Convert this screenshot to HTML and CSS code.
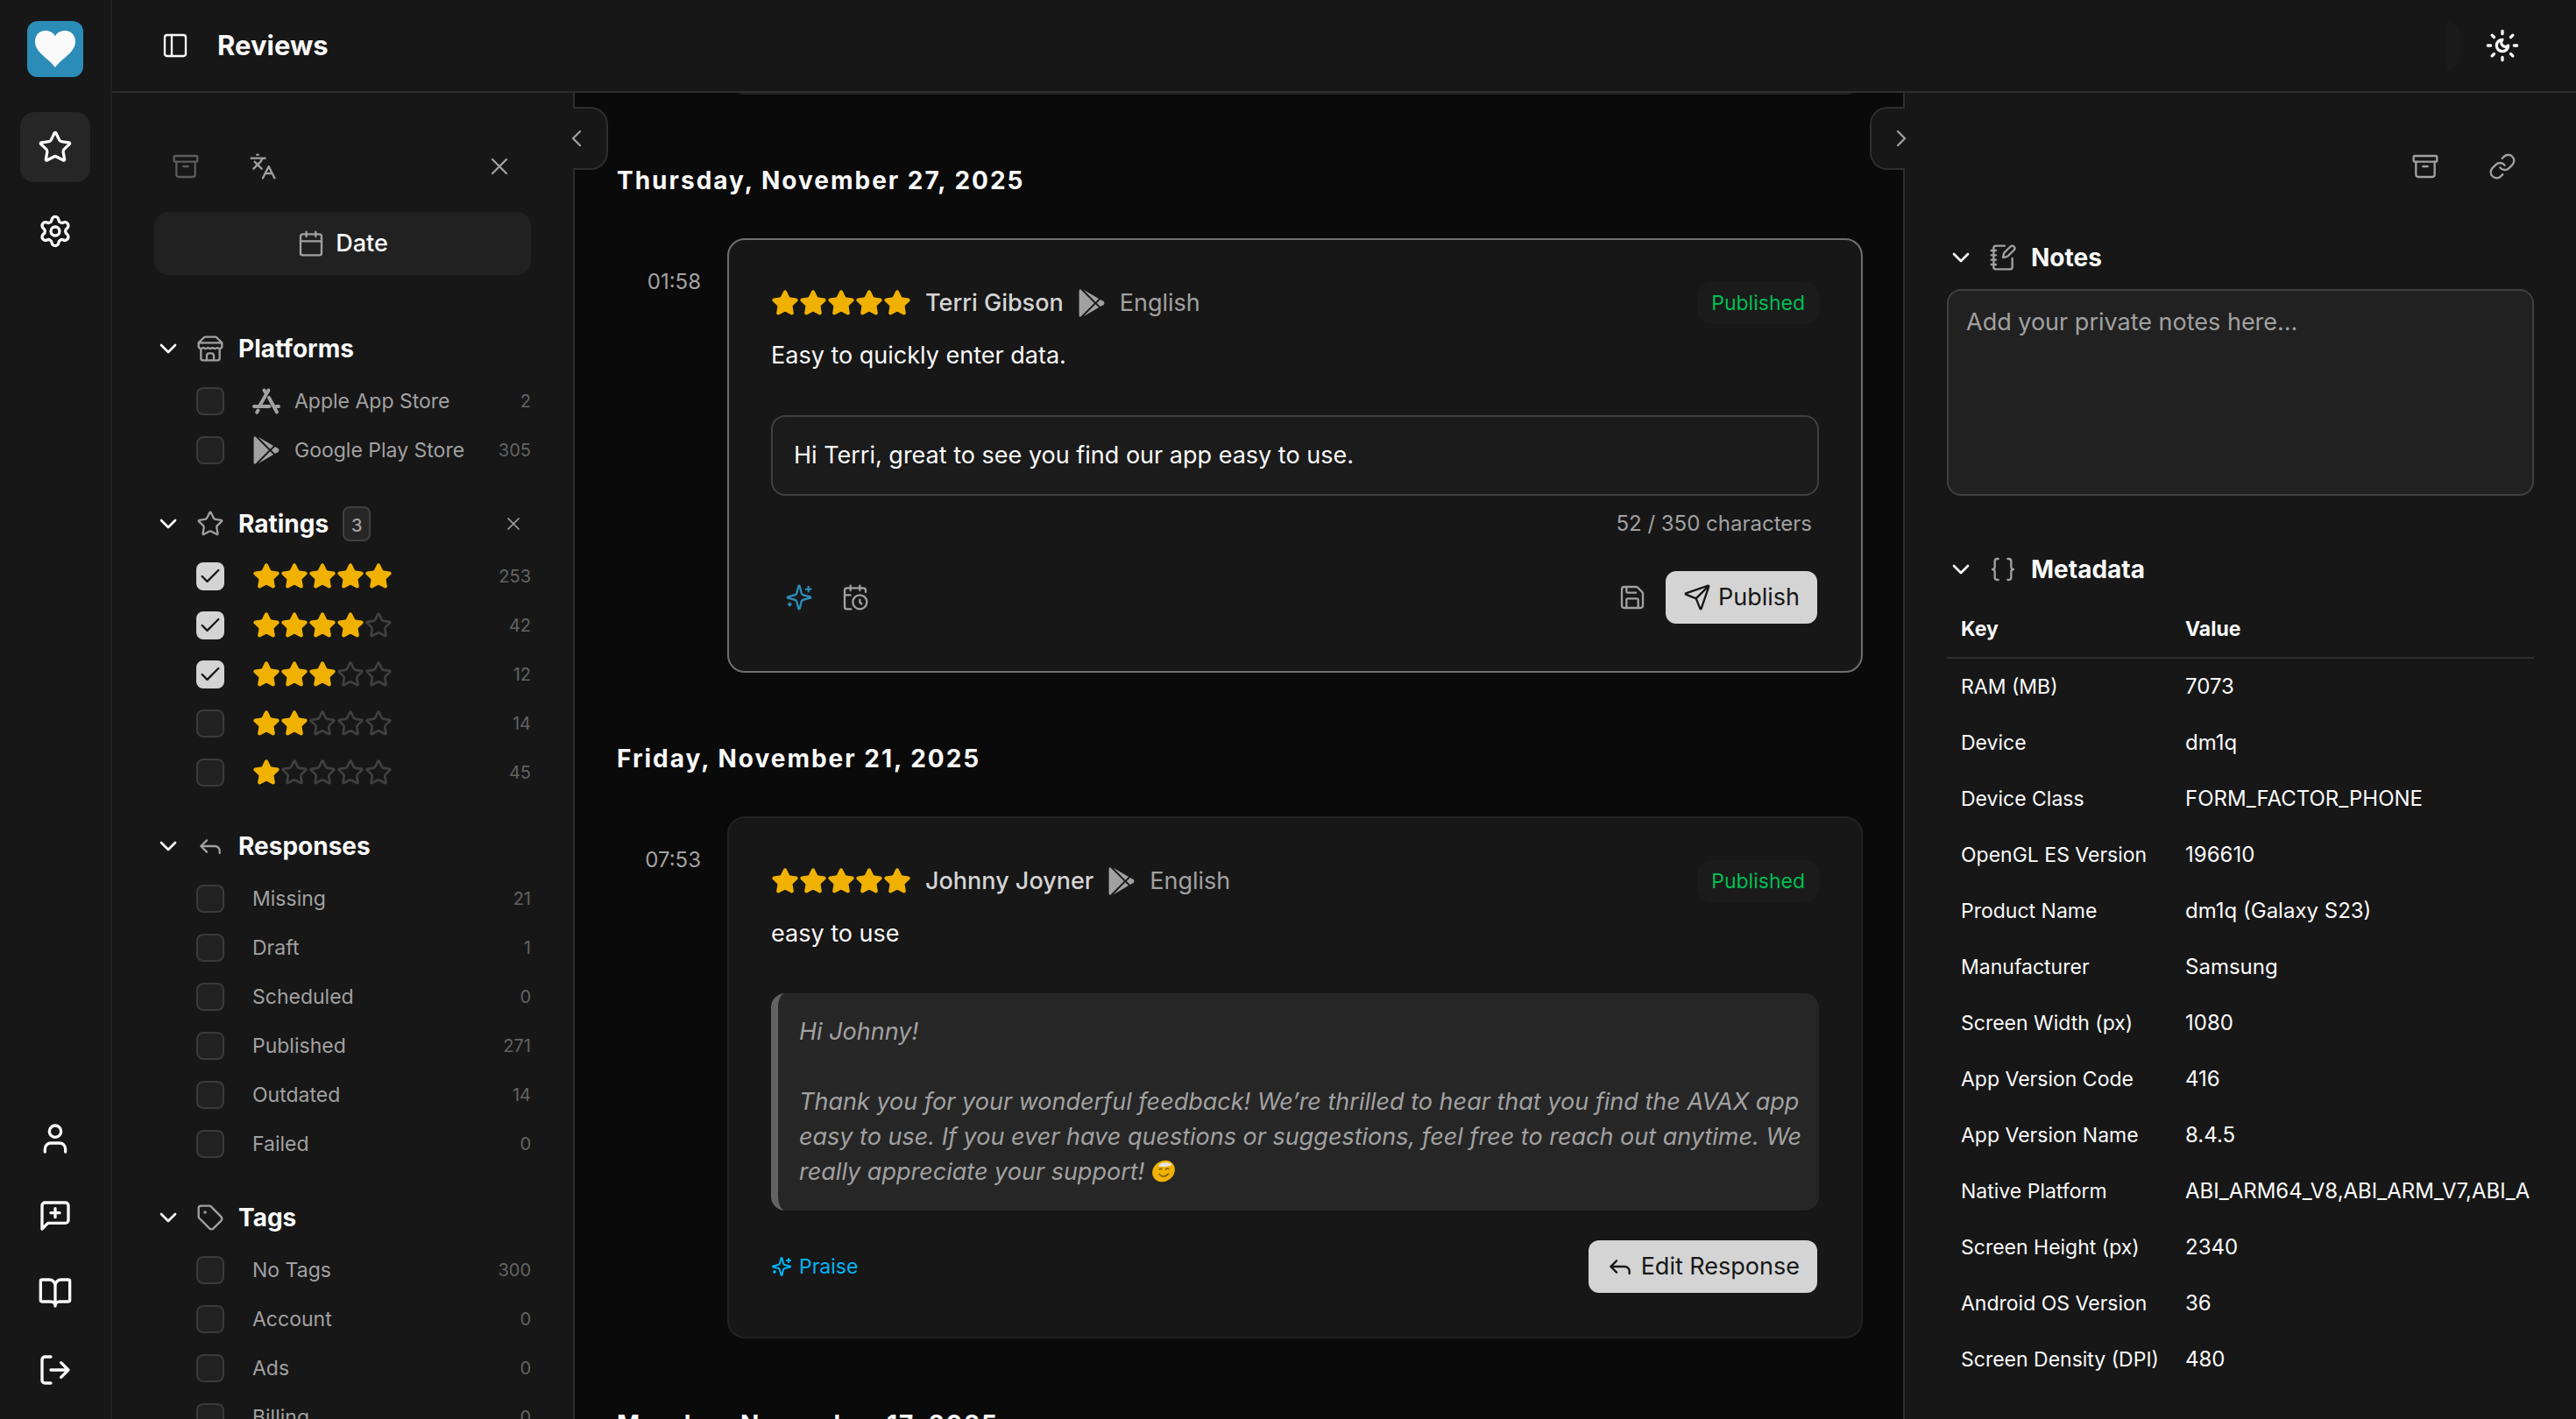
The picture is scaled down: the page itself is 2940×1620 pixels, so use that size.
FILE: index.html
```html
<!DOCTYPE html>
<html lang="en">
<head>
<meta charset="utf-8">
<meta name="viewport" content="width=device-width, initial-scale=1">
<title>Reviews</title>
<link rel="stylesheet" href="styles.css">
</head>
<body>
<svg class="sprite" aria-hidden="true">
  <symbol id="i-star" viewBox="0 0 24 24"><path d="M11.525 2.295a.53.53 0 0 1 .95 0l2.31 4.679a2.123 2.123 0 0 0 1.595 1.16l5.166.756a.53.53 0 0 1 .294.904l-3.736 3.638a2.123 2.123 0 0 0-.611 1.878l.882 5.14a.53.53 0 0 1-.771.56l-4.618-2.428a2.122 2.122 0 0 0-1.973 0L6.396 21.01a.53.53 0 0 1-.77-.56l.881-5.139a2.122 2.122 0 0 0-.611-1.879L2.16 9.795a.53.53 0 0 1 .294-.906l5.165-.755a2.122 2.122 0 0 0 1.597-1.16z"/></symbol>
  <symbol id="i-settings" viewBox="0 0 24 24"><path d="M9.671 4.136a2.34 2.34 0 0 1 4.659 0 2.34 2.34 0 0 0 3.319 1.915 2.34 2.34 0 0 1 2.33 4.033 2.34 2.34 0 0 0 0 3.831 2.34 2.34 0 0 1-2.33 4.033 2.34 2.34 0 0 0-3.319 1.915 2.34 2.34 0 0 1-4.659 0 2.34 2.34 0 0 0-3.32-1.915 2.34 2.34 0 0 1-2.33-4.033 2.34 2.34 0 0 0 0-3.831A2.34 2.34 0 0 1 6.35 6.051a2.34 2.34 0 0 0 3.319-1.915"/><circle cx="12" cy="12" r="3"/></symbol>
  <symbol id="i-user" viewBox="0 0 24 24"><path d="M19 21v-2a4 4 0 0 0-4-4H9a4 4 0 0 0-4 4v2"/><circle cx="12" cy="7" r="4"/></symbol>
  <symbol id="i-message" viewBox="0 0 24 24"><path d="M21 15a2 2 0 0 1-2 2H7l-4 4V5a2 2 0 0 1 2-2h14a2 2 0 0 1 2 2zM12 7v6M9 10h6"/></symbol>
  <symbol id="i-book" viewBox="0 0 24 24"><path d="M12 7v14M3 18a1 1 0 0 1-1-1V4a1 1 0 0 1 1-1h5a4 4 0 0 1 4 4 4 4 0 0 1 4-4h5a1 1 0 0 1 1 1v13a1 1 0 0 1-1 1h-6a3 3 0 0 0-3 3 3 3 0 0 0-3-3z"/></symbol>
  <symbol id="i-logout" viewBox="0 0 24 24"><path d="m16 17 5-5-5-5M21 12H9M9 21H5a2 2 0 0 1-2-2V5a2 2 0 0 1 2-2h4"/></symbol>
  <symbol id="i-panel" viewBox="0 0 24 24"><rect width="18" height="18" x="3" y="3" rx="2"/><path d="M9 3v18"/></symbol>
  <symbol id="i-sunmoon" viewBox="0 0 24 24"><path d="M12 8a2.83 2.83 0 0 0 4 4 4 4 0 1 1-4-4M12 2v2M12 20v2M4.9 4.9l1.4 1.4M17.7 17.7l1.4 1.4M2 12h2M20 12h2M6.3 17.7l-1.4 1.4M19.1 4.9l-1.4 1.4"/></symbol>
  <symbol id="i-archive" viewBox="0 0 24 24"><rect width="20" height="5" x="2" y="3" rx="1"/><path d="M4 8v11a2 2 0 0 0 2 2h12a2 2 0 0 0 2-2V8M10 12h4"/></symbol>
  <symbol id="i-languages" viewBox="0 0 24 24"><path d="m5 8 6 6M4 14l6-6 2-3M2 5h12M7 2h1M22 22l-5-10-5 10M14 18h6"/></symbol>
  <symbol id="i-x" viewBox="0 0 24 24"><path d="M18 6 6 18M6 6l12 12"/></symbol>
  <symbol id="i-calendar" viewBox="0 0 24 24"><path d="M8 2v4M16 2v4M3 10h18"/><rect width="18" height="18" x="3" y="4" rx="2"/></symbol>
  <symbol id="i-down" viewBox="0 0 24 24"><path d="m6 9 6 6 6-6"/></symbol>
  <symbol id="i-left" viewBox="0 0 24 24"><path d="m15 18-6-6 6-6"/></symbol>
  <symbol id="i-right" viewBox="0 0 24 24"><path d="m9 18 6-6-6-6"/></symbol>
  <symbol id="i-store" viewBox="0 0 24 24"><path d="m2 7 4.41-4.41A2 2 0 0 1 7.83 2h8.34a2 2 0 0 1 1.42.59L22 7M4 12v8a2 2 0 0 0 2 2h12a2 2 0 0 0 2-2v-8M15 22v-4a2 2 0 0 0-2-2h-2a2 2 0 0 0-2 2v4M2 7h20M22 7v3a2 2 0 0 1-2 2a2.7 2.7 0 0 1-1.59-.63.7.7 0 0 0-.82 0A2.7 2.7 0 0 1 16 12a2.7 2.7 0 0 1-1.59-.63.7.7 0 0 0-.82 0A2.7 2.7 0 0 1 12 12a2.7 2.7 0 0 1-1.59-.63.7.7 0 0 0-.82 0A2.7 2.7 0 0 1 8 12a2.7 2.7 0 0 1-1.59-.63.7.7 0 0 0-.82 0A2.7 2.7 0 0 1 4 12a2 2 0 0 1-2-2V7"/></symbol>
  <symbol id="i-reply" viewBox="0 0 24 24"><path d="m9 17-5-5 5-5M20 18v-2a4 4 0 0 0-4-4H4"/></symbol>
  <symbol id="i-tag" viewBox="0 0 24 24"><path d="M12.586 2.586A2 2 0 0 0 11.172 2H4a2 2 0 0 0-2 2v7.172a2 2 0 0 0 .586 1.414l8.704 8.704a2.426 2.426 0 0 0 3.42 0l6.58-6.58a2.426 2.426 0 0 0 0-3.42z"/><circle cx="7.5" cy="7.5" r=".5" fill="currentColor"/></symbol>
  <symbol id="i-appstore" viewBox="0 0 32 32"><path stroke-width="4" d="M18.500 3.500 8.500 21M6.500 26.500 5.200 28.800M2 22h17.500M27.500 22h2.500M13.500 3.500l1.500 2.600M19 12l9 16.500"/></symbol>
  <symbol id="i-play" viewBox="0 0 512 512"><path fill="currentColor" stroke="none" d="M325.3 234.3L104.600 13l280.800 161.200-60.100 60.100zM47 0C34 6.800 25.300 19.200 25.300 35.300v441.300c0 16.100 8.700 28.500 21.700 35.300l256.600-256L47 0zm425.200 225.600l-58.900-34.100-65.700 64.500 65.700 64.500 60.100-34.100c18-14.300 18-46.500-1.200-60.800zM104.600 499l280.800-161.200-60.100-60.100L104.600 499z"/></symbol>
  <symbol id="i-sparkles" viewBox="0 0 24 24"><path d="M9.937 15.5A2 2 0 0 0 8.5 14.063l-6.135-1.582a.5.5 0 0 1 0-.962L8.5 9.936A2 2 0 0 0 9.937 8.5l1.582-6.135a.5.5 0 0 1 .963 0L14.063 8.5A2 2 0 0 0 15.5 9.937l6.135 1.581a.5.5 0 0 1 0 .964L15.5 14.063a2 2 0 0 0-1.437 1.437l-1.582 6.135a.5.5 0 0 1-.963 0zM20 3v4M22 5h-4M4 17v2M5 18H3"/></symbol>
  <symbol id="i-schedule" viewBox="0 0 24 24"><path d="M21 7.500V6a2 2 0 0 0-2-2H5a2 2 0 0 0-2 2v14a2 2 0 0 0 2 2h3.500M16 2v4M8 2v4M3 10h5M17.500 17.500 16 16.300V14"/><circle cx="16" cy="16" r="6"/></symbol>
  <symbol id="i-save" viewBox="0 0 24 24"><path d="M15.200 3a2 2 0 0 1 1.400.6l3.800 3.800a2 2 0 0 1 .6 1.400V19a2 2 0 0 1-2 2H5a2 2 0 0 1-2-2V5a2 2 0 0 1 2-2zM17 21v-7a1 1 0 0 0-1-1H8a1 1 0 0 0-1 1v7M7 3v4a1 1 0 0 0 1 1h7"/></symbol>
  <symbol id="i-send" viewBox="0 0 24 24"><path d="M14.536 21.686a.5.5 0 0 0 .937-.024l6.5-19a.496.496 0 0 0-.635-.635l-19 6.5a.5.5 0 0 0-.024.937l7.930 3.180a2 2 0 0 1 1.112 1.110zM21.854 2.147l-10.940 10.939"/></symbol>
  <symbol id="i-link" viewBox="0 0 24 24"><path d="M10 13a5 5 0 0 0 7.540.540l3-3a5 5 0 0 0-7.070-7.070l-1.720 1.710M14 11a5 5 0 0 0-7.540-.540l-3 3a5 5 0 0 0 7.070 7.070l1.710-1.710"/></symbol>
  <symbol id="i-notebook" viewBox="0 0 24 24"><path d="M13.400 2H6a2 2 0 0 0-2 2v16a2 2 0 0 0 2 2h12a2 2 0 0 0 2-2v-7.400M2 6h4M2 10h4M2 14h4M2 18h4M21.378 5.626a1 1 0 1 0-3.004-3.004l-5.010 5.012a2 2 0 0 0-.506.854l-.837 2.870a.5.5 0 0 0 .62.62l2.870-.837a2 2 0 0 0 .854-.506z"/></symbol>
  <symbol id="i-braces" viewBox="0 0 24 24"><path d="M8 3H7a2 2 0 0 0-2 2v5a2 2 0 0 1-2 2 2 2 0 0 1 2 2v5c0 1.100.9 2 2 2h1M16 21h1a2 2 0 0 0 2-2v-5c0-1.100.9-2 2-2a2 2 0 0 1-2-2V5a2 2 0 0 0-2-2h-1"/></symbol>
  <symbol id="i-stars-5" viewBox="0 0 120 24"><use href="#i-star" width="24" height="24"/><use href="#i-star" x="24" width="24" height="24"/><use href="#i-star" x="48" width="24" height="24"/><use href="#i-star" x="72" width="24" height="24"/><use href="#i-star" x="96" width="24" height="24"/></symbol>
</svg>

<div class="app">
  <nav class="rail" aria-label="Main">
    <a class="logo" href="#" aria-label="Home">
      <svg viewBox="0 0 64 64"><path fill="#fafafa" d="M32 53C24 42 9 36 9 23.500 9 16 14 11 20.500 11c5.500 0 10 2.500 11.500 6.500C33.500 13.500 38 11 43.500 11 50 11 55 16 55 23.500 55 36 40 42 32 53z"/></svg>
    </a>
    <div class="rail-group">
      <a class="rail-link is-active" href="#" aria-label="Reviews"><svg class="icon"><use href="#i-star"/></svg></a>
      <a class="rail-link" href="#" aria-label="Settings"><svg class="icon"><use href="#i-settings"/></svg></a>
    </div>
    <div class="rail-group rail-group-bottom">
      <a class="rail-link" href="#" aria-label="Account"><svg class="icon"><use href="#i-user"/></svg></a>
      <a class="rail-link" href="#" aria-label="Feedback"><svg class="icon"><use href="#i-message"/></svg></a>
      <a class="rail-link" href="#" aria-label="Documentation"><svg class="icon"><use href="#i-book"/></svg></a>
      <a class="rail-link" href="#" aria-label="Log out"><svg class="icon"><use href="#i-logout"/></svg></a>
    </div>
  </nav>

  <div class="page">
    <header class="topbar">
      <button class="icon-button is-bright" type="button" aria-label="Toggle sidebar"><svg class="icon"><use href="#i-panel"/></svg></button>
      <h1 class="page-title">Reviews</h1>
      <span class="topbar-edge"></span>
      <button class="icon-button is-bright is-large" type="button" aria-label="Toggle theme"><svg class="icon"><use href="#i-sunmoon"/></svg></button>
    </header>

    <div class="columns">
      <aside class="panel filters" aria-label="Filters">
        <button class="handle handle-left" type="button" aria-label="Collapse filters"><svg class="icon"><use href="#i-left"/></svg></button>
        <div class="panel-scroll">
          <div class="toolbar">
            <button class="icon-button is-faded" type="button" aria-label="Archived"><svg class="icon"><use href="#i-archive"/></svg></button>
            <button class="icon-button" type="button" aria-label="Translate"><svg class="icon"><use href="#i-languages"/></svg></button>
            <button class="icon-button push-right" type="button" aria-label="Clear filters"><svg class="icon"><use href="#i-x"/></svg></button>
          </div>
          <button class="date-button" type="button"><svg class="icon"><use href="#i-calendar"/></svg>Date</button>

          <section class="filter-group">
            <h2 class="group-head"><svg class="icon chevron"><use href="#i-down"/></svg><svg class="icon"><use href="#i-store"/></svg>Platforms</h2>
            <label class="option"><input class="check" type="checkbox"><span class="option-name"><svg class="icon"><use href="#i-appstore"/></svg>Apple App Store</span><span class="count">2</span></label>
            <label class="option"><input class="check" type="checkbox"><span class="option-name"><svg class="icon"><use href="#i-play"/></svg>Google Play Store</span><span class="count">305</span></label>
          </section>

          <section class="filter-group">
            <h2 class="group-head"><svg class="icon chevron"><use href="#i-down"/></svg><svg class="icon"><use href="#i-star"/></svg>Ratings<span class="badge">3</span><button class="clear-button push-right" type="button" aria-label="Clear ratings"><svg class="icon"><use href="#i-x"/></svg></button></h2>
            <label class="option"><input class="check" type="checkbox" checked aria-label="5 stars"><span class="option-name stars"><svg class="star on"><use href="#i-star"/></svg><svg class="star on"><use href="#i-star"/></svg><svg class="star on"><use href="#i-star"/></svg><svg class="star on"><use href="#i-star"/></svg><svg class="star on"><use href="#i-star"/></svg></span><span class="count">253</span></label>
            <label class="option"><input class="check" type="checkbox" checked aria-label="4 stars"><span class="option-name stars"><svg class="star on"><use href="#i-star"/></svg><svg class="star on"><use href="#i-star"/></svg><svg class="star on"><use href="#i-star"/></svg><svg class="star on"><use href="#i-star"/></svg><svg class="star"><use href="#i-star"/></svg></span><span class="count">42</span></label>
            <label class="option"><input class="check" type="checkbox" checked aria-label="3 stars"><span class="option-name stars"><svg class="star on"><use href="#i-star"/></svg><svg class="star on"><use href="#i-star"/></svg><svg class="star on"><use href="#i-star"/></svg><svg class="star"><use href="#i-star"/></svg><svg class="star"><use href="#i-star"/></svg></span><span class="count">12</span></label>
            <label class="option"><input class="check" type="checkbox" aria-label="2 stars"><span class="option-name stars"><svg class="star on"><use href="#i-star"/></svg><svg class="star on"><use href="#i-star"/></svg><svg class="star"><use href="#i-star"/></svg><svg class="star"><use href="#i-star"/></svg><svg class="star"><use href="#i-star"/></svg></span><span class="count">14</span></label>
            <label class="option"><input class="check" type="checkbox" aria-label="1 star"><span class="option-name stars"><svg class="star on"><use href="#i-star"/></svg><svg class="star"><use href="#i-star"/></svg><svg class="star"><use href="#i-star"/></svg><svg class="star"><use href="#i-star"/></svg><svg class="star"><use href="#i-star"/></svg></span><span class="count">45</span></label>
          </section>

          <section class="filter-group">
            <h2 class="group-head"><svg class="icon chevron"><use href="#i-down"/></svg><svg class="icon"><use href="#i-reply"/></svg>Responses</h2>
            <label class="option"><input class="check" type="checkbox"><span class="option-name">Missing</span><span class="count">21</span></label>
            <label class="option"><input class="check" type="checkbox"><span class="option-name">Draft</span><span class="count">1</span></label>
            <label class="option"><input class="check" type="checkbox"><span class="option-name">Scheduled</span><span class="count">0</span></label>
            <label class="option"><input class="check" type="checkbox"><span class="option-name">Published</span><span class="count">271</span></label>
            <label class="option"><input class="check" type="checkbox"><span class="option-name">Outdated</span><span class="count">14</span></label>
            <label class="option"><input class="check" type="checkbox"><span class="option-name">Failed</span><span class="count">0</span></label>
          </section>

          <section class="filter-group">
            <h2 class="group-head"><svg class="icon chevron"><use href="#i-down"/></svg><svg class="icon"><use href="#i-tag"/></svg>Tags</h2>
            <label class="option"><input class="check" type="checkbox"><span class="option-name">No Tags</span><span class="count">300</span></label>
            <label class="option"><input class="check" type="checkbox"><span class="option-name">Account</span><span class="count">0</span></label>
            <label class="option"><input class="check" type="checkbox"><span class="option-name">Ads</span><span class="count">0</span></label>
            <label class="option"><input class="check" type="checkbox"><span class="option-name">Billing</span><span class="count">0</span></label>
          </section>
        </div>
      </aside>

      <main class="feed">
        <div class="entry entry-previous"><span class="time"></span><article class="card"></article></div>

        <h2 class="day">Thursday, November 27, 2025</h2>
        <div class="entry">
          <time class="time">01:58</time>
          <article class="card is-selected">
            <div class="card-head">
              <svg class="star-row"><use href="#i-stars-5"/></svg>
              <span class="author">Terri Gibson</span>
              <svg class="icon"><use href="#i-play"/></svg>
              <span class="language">English</span>
              <span class="status">Published</span>
            </div>
            <p class="review-text">Easy to quickly enter data.</p>
            <textarea class="reply-box" rows="1" aria-label="Response">Hi Terri, great to see you find our app easy to use.</textarea>
            <p class="char-count">52 / 350 characters</p>
            <div class="actions actions-edit">
              <button class="icon-button is-accent" type="button" aria-label="Generate response"><svg class="icon"><use href="#i-sparkles"/></svg></button>
              <button class="icon-button" type="button" aria-label="Schedule"><svg class="icon"><use href="#i-schedule"/></svg></button>
              <button class="icon-button push-right" type="button" aria-label="Save draft"><svg class="icon"><use href="#i-save"/></svg></button>
              <button class="primary" type="button"><svg class="icon"><use href="#i-send"/></svg>Publish</button>
            </div>
          </article>
        </div>

        <h2 class="day">Friday, November 21, 2025</h2>
        <div class="entry">
          <time class="time">07:53</time>
          <article class="card">
            <div class="card-head">
              <svg class="star-row"><use href="#i-stars-5"/></svg>
              <span class="author">Johnny Joyner</span>
              <svg class="icon"><use href="#i-play"/></svg>
              <span class="language">English</span>
              <span class="status">Published</span>
            </div>
            <p class="review-text">easy to use</p>
            <blockquote class="response">Hi Johnny!<br><br>Thank you for your wonderful feedback! We’re thrilled to hear that you find the AVAX app easy to use. If you ever have questions or suggestions, feel free to reach out anytime. We really appreciate your support! <svg class="emoji" viewBox="0 0 28 28" role="img" aria-label="Smiling face with halo"><g transform="rotate(-35 14 14)"><ellipse cx="14" cy="14" rx="13.500" ry="11.500" fill="#f0b100"/></g><path d="M8 8c1-4 12-5 15-2 1 3-13 4-15 2z" fill="#e5e5e5"/><path d="M9 12.500c1-2 3-1.500 3 0M16 12.500c1-2 3.500-2 4-.5M9 17c2 4 8 4 11-.5" fill="none" stroke="#7a5a08" stroke-width="1.500"/></svg></blockquote>
            <div class="actions">
              <span class="topic"><svg class="icon"><use href="#i-sparkles"/></svg>Praise</span>
              <button class="primary push-right" type="button"><svg class="icon"><use href="#i-reply"/></svg>Edit Response</button>
            </div>
          </article>
        </div>

        <h2 class="day">Monday, November 17, 2025</h2>
      </main>

      <aside class="panel details" aria-label="Review details">
        <button class="handle handle-right" type="button" aria-label="Collapse details"><svg class="icon"><use href="#i-right"/></svg></button>
        <div class="panel-scroll">
          <div class="toolbar toolbar-end">
            <button class="icon-button" type="button" aria-label="Archive"><svg class="icon"><use href="#i-archive"/></svg></button>
            <button class="icon-button" type="button" aria-label="Copy link"><svg class="icon"><use href="#i-link"/></svg></button>
          </div>
          <section class="notes">
            <h2 class="group-head"><svg class="icon chevron"><use href="#i-down"/></svg><svg class="icon"><use href="#i-notebook"/></svg>Notes</h2>
            <textarea class="notes-box" aria-label="Notes" placeholder="Add your private notes here…"></textarea>
          </section>
          <section>
            <h2 class="group-head"><svg class="icon chevron"><use href="#i-down"/></svg><svg class="icon"><use href="#i-braces"/></svg>Metadata</h2>
            <table class="meta">
              <thead><tr><th class="key">Key</th><th>Value</th></tr></thead>
              <tbody>
                <tr><td>RAM (MB)</td><td>7073</td></tr>
                <tr><td>Device</td><td>dm1q</td></tr>
                <tr><td>Device Class</td><td>FORM_FACTOR_PHONE</td></tr>
                <tr><td>OpenGL ES Version</td><td>196610</td></tr>
                <tr><td>Product Name</td><td>dm1q (Galaxy S23)</td></tr>
                <tr><td>Manufacturer</td><td>Samsung</td></tr>
                <tr><td>Screen Width (px)</td><td>1080</td></tr>
                <tr><td>App Version Code</td><td>416</td></tr>
                <tr><td>App Version Name</td><td>8.4.5</td></tr>
                <tr><td>Native Platform</td><td>ABI_ARM64_V8,ABI_ARM_V7,ABI_A</td></tr>
                <tr><td>Screen Height (px)</td><td>2340</td></tr>
                <tr><td>Android OS Version</td><td>36</td></tr>
                <tr><td>Screen Density (DPI)</td><td>480</td></tr>
              </tbody>
            </table>
          </section>
        </div>
      </aside>
    </div>
  </div>
</div>
</body>
</html>
```
FILE: styles.css
```css
:root {
  --bg: #0a0a0a;
  --panel: #171717;
  --raised: #262626;
  --field: #212121;
  --line: #2e2e2e;
  --line-strong: #404040;
  --text: #fafafa;
  --soft: #d4d4d4;
  --muted: #a1a1a1;
  --dim: #636363;
  --yellow: #f0b100;
  --size-heading: 28px;
  --size-body: 27px;
  --size-note: 24px;
  --size-label: 23px;
  --size-count: 20px;
}

*,
*::before,
*::after {
  box-sizing: border-box;
}

body {
  margin: 0;
  background: var(--bg);
  color: var(--text);
  font-family: Inter, "Liberation Sans", sans-serif;
  font-size: var(--size-body);
  line-height: 40px;
}

h1,
h2,
p,
blockquote {
  margin: 0;
  font-size: inherit;
  font-weight: inherit;
}

button,
textarea {
  border: 0;
  padding: 0;
  background: none;
  color: inherit;
  font: inherit;
}

.sprite {
  position: absolute;
  width: 0;
  height: 0;
}

.icon {
  flex: none;
  width: 32px;
  height: 32px;
  fill: none;
  stroke: currentColor;
  stroke-width: 1.75;
  stroke-linecap: round;
  stroke-linejoin: round;
}

.push-right {
  margin-left: auto;
}

.app {
  display: flex;
  height: 100vh;
  overflow: hidden;
}

/* Icon rail */
.rail {
  display: flex;
  flex: none;
  flex-direction: column;
  align-items: center;
  width: 128px;
  padding: 24px 0 16px;
  border-right: 2px solid #212121;
  background: var(--panel);
}

.logo {
  width: 64px;
  height: 64px;
  margin-bottom: 40px;
  border-radius: 12px;
  background: #2b8cb8;
}

.logo svg {
  display: block;
}

.rail-group {
  display: flex;
  flex-direction: column;
  gap: 16px;
}

.rail-group-bottom {
  gap: 8px;
  margin-top: auto;
}

.rail-link {
  display: grid;
  place-items: center;
  width: 80px;
  height: 80px;
  border-radius: 16px;
  color: var(--text);
}

.rail-link.is-active {
  background: var(--raised);
}

.rail-link .icon {
  width: 40px;
  height: 40px;
  stroke-width: 2;
}

/* Page frame */
.page {
  display: flex;
  flex: 1;
  flex-direction: column;
  min-width: 0;
}

.topbar {
  display: flex;
  flex: none;
  align-items: center;
  gap: 16px;
  height: 106px;
  padding: 0 52px 0 40px;
  border-bottom: 2px solid var(--line);
  background: var(--panel);
}

.page-title {
  font-size: 31px;
  font-weight: 700;
}

.topbar-edge {
  width: 16px;
  height: 56px;
  margin-left: auto;
  border-radius: 0 20px 20px 0;
  background: #1a1a1a;
}

.columns {
  display: flex;
  flex: 1;
  min-height: 0;
}

/* Side panels */
.panel {
  position: relative;
  z-index: 1;
  flex: none;
  background: var(--panel);
}

.filters {
  width: 528px;
  border-right: 2px solid var(--line);
}

.details {
  width: 768px;
  border-left: 2px solid var(--line);
}

.panel-scroll {
  height: 100%;
  padding: 52px 48px 0;
  overflow: hidden;
}

.handle {
  position: absolute;
  top: 16px;
  display: flex;
  align-items: center;
  width: 40px;
  height: 72px;
  border: 2px solid var(--line);
  background: var(--panel);
  color: var(--muted);
}

.handle-left {
  left: 100%;
  border-left: 0;
  border-radius: 0 20px 20px 0;
}

.handle-right {
  right: 100%;
  justify-content: flex-end;
  border-right: 0;
  border-radius: 20px 0 0 20px;
}

.handle-left .icon {
  margin-left: -12px;
}

.handle-right .icon {
  margin-right: -12px;
}

.toolbar {
  display: flex;
  gap: 24px;
  padding: 0 4px;
}

.toolbar-end {
  justify-content: flex-end;
  margin-bottom: 40px;
}

.icon-button {
  display: grid;
  place-items: center;
  width: 64px;
  height: 64px;
  color: var(--muted);
}

.icon-button.is-bright {
  color: var(--text);
}

.icon-button.is-faded {
  color: #5c5c5c;
}

.icon-button.is-accent {
  color: #2b8cb8;
}

.icon-button.is-large .icon {
  width: 40px;
  height: 40px;
  stroke-width: 2;
}

.date-button {
  display: flex;
  align-items: center;
  justify-content: center;
  gap: 12px;
  width: 100%;
  height: 72px;
  margin: 20px 0 52px;
  border-radius: 16px;
  background: var(--field);
  font-weight: 500;
}

.date-button .icon {
  color: var(--muted);
}

.group-head {
  display: flex;
  align-items: center;
  gap: 16px;
  height: 64px;
  font-size: var(--size-heading);
  font-weight: 700;
}

.group-head .icon {
  color: var(--muted);
}

.group-head .chevron {
  color: var(--text);
  stroke-width: 2;
}

.badge {
  display: grid;
  place-items: center;
  min-width: 32px;
  height: 40px;
  border: 2px solid var(--line-strong);
  border-radius: 8px;
  background: var(--raised);
  color: var(--muted);
  font-size: var(--size-count);
  font-weight: 500;
}

.clear-button {
  display: grid;
  place-items: center;
  width: 40px;
  height: 40px;
}

.clear-button .icon {
  width: 24px;
  height: 24px;
}

.filter-group {
  margin-bottom: 24px;
}

.option {
  display: flex;
  align-items: center;
  gap: 32px;
  height: 56px;
  padding-left: 48px;
  color: var(--muted);
  font-size: var(--size-label);
}

.option-name {
  display: flex;
  flex: 1;
  align-items: center;
  gap: 16px;
  white-space: nowrap;
}

.option-name.stars {
  gap: 0;
}

.count {
  color: var(--dim);
  font-size: var(--size-count);
}

.check {
  flex: none;
  appearance: none;
  width: 32px;
  height: 32px;
  margin: 0;
  border: 2px solid #3a3a3a;
  border-radius: 8px;
  background: var(--field);
}

.check:checked {
  border-color: var(--soft);
  background: var(--soft) url("data:image/svg+xml,%3Csvg xmlns='http://www.w3.org/2000/svg' viewBox='0 0 24 24' fill='none' stroke='%23171717' stroke-width='2' stroke-linecap='round' stroke-linejoin='round'%3E%3Cpath d='M20 6 9 17l-5-5'/%3E%3C/svg%3E") center / 28px no-repeat;
}

.star {
  width: 32px;
  height: 32px;
  fill: none;
  stroke: var(--line-strong);
  stroke-width: 2;
  stroke-linejoin: round;
}

.star.on {
  fill: var(--yellow);
  stroke: var(--yellow);
}

/* Review feed */
.feed {
  flex: 1;
  min-width: 0;
  padding: 0 46px 0 48px;
  overflow: hidden;
}

.day {
  padding: 78px 0 46px;
  font-size: var(--size-heading);
  font-weight: 700;
  letter-spacing: 2px;
}

.entry {
  display: flex;
  gap: 30px;
}

.entry-previous {
  height: 2px;
  align-items: flex-end;
}

.entry-previous .card {
  height: 100px;
}

.time {
  flex: none;
  width: 96px;
  padding-top: 30px;
  color: var(--muted);
  font-size: var(--size-note);
  text-align: right;
}

.card {
  flex: 1;
  min-width: 0;
  padding: 48px;
  border: 2px solid #222;
  border-radius: 20px;
  background: var(--panel);
}

.card.is-selected {
  border-color: #6f6f6f;
}

.card-head {
  display: flex;
  align-items: center;
  gap: 16px;
  height: 48px;
  color: var(--muted);
}

.star-row {
  width: 160px;
  height: 32px;
  fill: var(--yellow);
  stroke: var(--yellow);
  stroke-width: 2;
  stroke-linejoin: round;
}

.author {
  color: var(--soft);
  font-weight: 500;
}

.status {
  margin-left: auto;
  padding: 4px 16px;
  border-radius: 16px;
  background: #1b1b1b;
  color: #00bf52;
  font-size: var(--size-label);
}

.review-text {
  margin: 16px 0 48px;
}

.reply-box {
  display: block;
  width: 100%;
  height: 92px;
  padding: 24px;
  border: 2px solid var(--line-strong);
  border-radius: 16px;
  background: #1b1b1b;
  overflow: hidden;
  resize: none;
}

.char-count {
  margin-top: 16px;
  padding-right: 8px;
  color: var(--muted);
  font-size: var(--size-note);
  line-height: 32px;
  text-align: right;
}

.response {
  padding: 24px 8px 24px 24px;
  border-left: 8px solid var(--dim);
  border-radius: 16px;
  background: var(--raised);
  color: var(--muted);
  font-style: italic;
}

.emoji {
  width: 28px;
  height: 28px;
  vertical-align: -4px;
}

.actions {
  display: flex;
  align-items: center;
  margin-top: 32px;
  padding: 2px 2px 2px 0;
}

.actions-edit {
  margin: 36px 0 4px;
}

.actions-edit .icon-button {
  height: 60px;
}

.primary {
  display: flex;
  align-items: center;
  gap: 8px;
  height: 60px;
  padding: 0 20px;
  border-radius: 12px;
  background: var(--soft);
  color: var(--panel);
}

.actions .primary {
  margin-left: 6px;
}

.actions .primary.push-right {
  margin-left: auto;
}

.topic {
  display: flex;
  align-items: center;
  gap: 8px;
  color: #00b4f5;
  font-size: var(--size-label);
}

.topic .icon {
  width: 24px;
  height: 24px;
  stroke-width: 2;
}

/* Details */
.notes {
  margin-bottom: 52px;
}

.notes-box {
  display: block;
  width: 100%;
  height: 236px;
  margin-top: 4px;
  padding: 16px 20px;
  border: 2px solid var(--line-strong);
  border-radius: 16px;
  background: var(--field);
  resize: none;
}

.notes-box::placeholder {
  color: var(--muted);
  opacity: 1;
}

.meta {
  width: 100%;
  margin-top: 4px;
  border-collapse: separate;
  border-spacing: 0;
  table-layout: fixed;
  font-size: var(--size-note);
}

.meta th,
.meta td {
  height: 64px;
  padding: 0 0 0 16px;
  overflow: hidden;
  text-align: left;
  white-space: nowrap;
}

.meta td:first-child,
.meta th {
  font-size: var(--size-label);
}

.meta th {
  height: 66px;
  border-bottom: 2px solid var(--line);
  font-weight: 700;
}

.meta .key {
  width: 256px;
}
```
